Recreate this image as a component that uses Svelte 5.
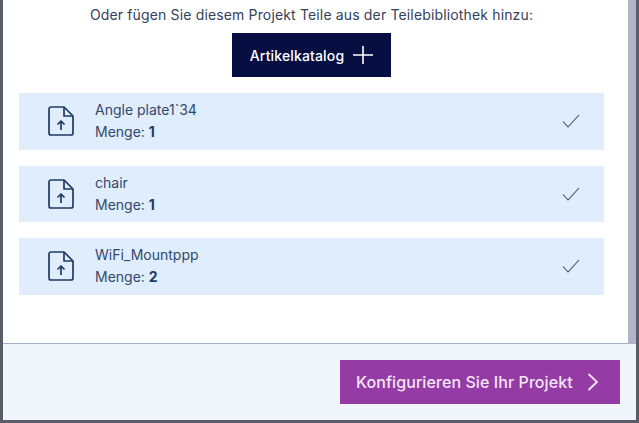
<script>
	const parts = [
		{ name: 'Angle plate1`34', qty: 1 },
		{ name: 'chair', qty: 1 },
		{ name: 'WiFi_Mountppp', qty: 2 }
	];
</script>

<div class="frame">
	<div class="modal">
		<div class="body">
			<div class="content">
				<p class="hint">Oder fügen Sie diesem Projekt Teile aus der Teilebibliothek hinzu:</p>
				<button class="catalog">
					Artikelkatalog
					<svg width="20" height="20" viewBox="0 0 20 20" fill="none" stroke="#fff" stroke-width="1.6">
						<path d="M10 1v18M0 10h20" />
					</svg>
				</button>
				<ul class="parts">
					{#each parts as part}
						<li class="part">
							<svg class="file" width="26" height="30" viewBox="0 0 26 30" fill="none" stroke="#1f3a63" stroke-width="1.7" stroke-linejoin="round">
								<path d="M3 1h13l9 9v17a2 2 0 0 1-2 2H3a2 2 0 0 1-2-2V3a2 2 0 0 1 2-2z" />
								<path d="M16 1v9h9" />
								<path d="M13 24v-9M9.500 18.500 13 15l3.500 3.500" />
							</svg>
							<div class="info">
								<div class="name">{part.name}</div>
								<div class="qty">Menge: <b>{part.qty}</b></div>
							</div>
							<svg class="check" width="18" height="14" viewBox="0 0 18 14" fill="none" stroke="#3d4f6b" stroke-width="1.100">
								<path d="M1 7.500 6 13 17 1" />
							</svg>
						</li>
					{/each}
				</ul>
			</div>
			<div class="scrollbar"></div>
		</div>
		<div class="footer">
			<button class="next">
				<span>Konfigurieren Sie Ihr Projekt</span>
				<svg width="12" height="18" viewBox="0 0 12 18" fill="none" stroke="#f6e6f8" stroke-width="1.800">
					<path d="M1.500 1 10 9l-8.500 8" />
				</svg>
			</button>
		</div>
	</div>
</div>

<style>
	:global(body) {
		margin: 0;
		background: #5a5c6a;
	}

	.frame {
		width: 639px;
		height: 423px;
		padding: 0 3px 3px;
		box-sizing: border-box;
		font-family: Inter, 'Noto Sans', sans-serif;
		overflow: hidden;
	}

	.modal {
		display: flex;
		flex-direction: column;
		height: 100%;
	}

	.body {
		display: flex;
		height: 343px;
		border-bottom: 1px solid #a3b2cc;
		flex: none;
	}

	.content {
		flex: 1;
		background: #fff;
		padding: 0 24px 0 16px;
		display: flex;
		flex-direction: column;
		align-items: center;
	}

	.scrollbar {
		width: 8px;
		background: #b0b4c6;
	}

	.hint {
		margin: 5px 0 0;
		height: 20px;
		font-size: 14px;
		line-height: 20px;
		letter-spacing: 0.15px;
		color: #33415c;
		text-align: center;
		white-space: nowrap;
	}

	button {
		border: 0;
		font-family: inherit;
		display: flex;
		align-items: center;
		color: #fff;
		padding: 0;
	}

	.catalog {
		margin-top: 8px;
		width: 159px;
		height: 44px;
		background: #060e42;
		font-size: 14px;
		font-weight: 500;
		letter-spacing: 0.15px;
		justify-content: center;
		gap: 9px;
	}

	.parts {
		list-style: none;
		margin: 16px 0 0;
		padding: 0;
		width: 100%;
		display: flex;
		flex-direction: column;
		gap: 16px;
	}

	.part {
		height: 56.500px;
		background: #dfedfc;
		display: flex;
		align-items: center;
		padding: 0 24px 0 29px;
	}

	.file {
		flex: none;
	}

	.info {
		flex: 1;
		margin-left: 21px;
		font-size: 14px;
		line-height: 22px;
		color: #33496b;
	}

	.qty b {
		color: #1f3a63;
	}

	.footer {
		flex: 1;
		background: #f1f6fd;
		display: flex;
		justify-content: flex-end;
		align-items: center;
		padding: 0 16px 0 0;
	}

	.next {
		width: 280px;
		height: 44px;
		background: #943ba5;
		color: #f6e6f8;
		font-size: 16px;
		font-weight: 500;
		padding-left: 16px;
		gap: 14px;
		letter-spacing: 0.08px;
	}
</style>
